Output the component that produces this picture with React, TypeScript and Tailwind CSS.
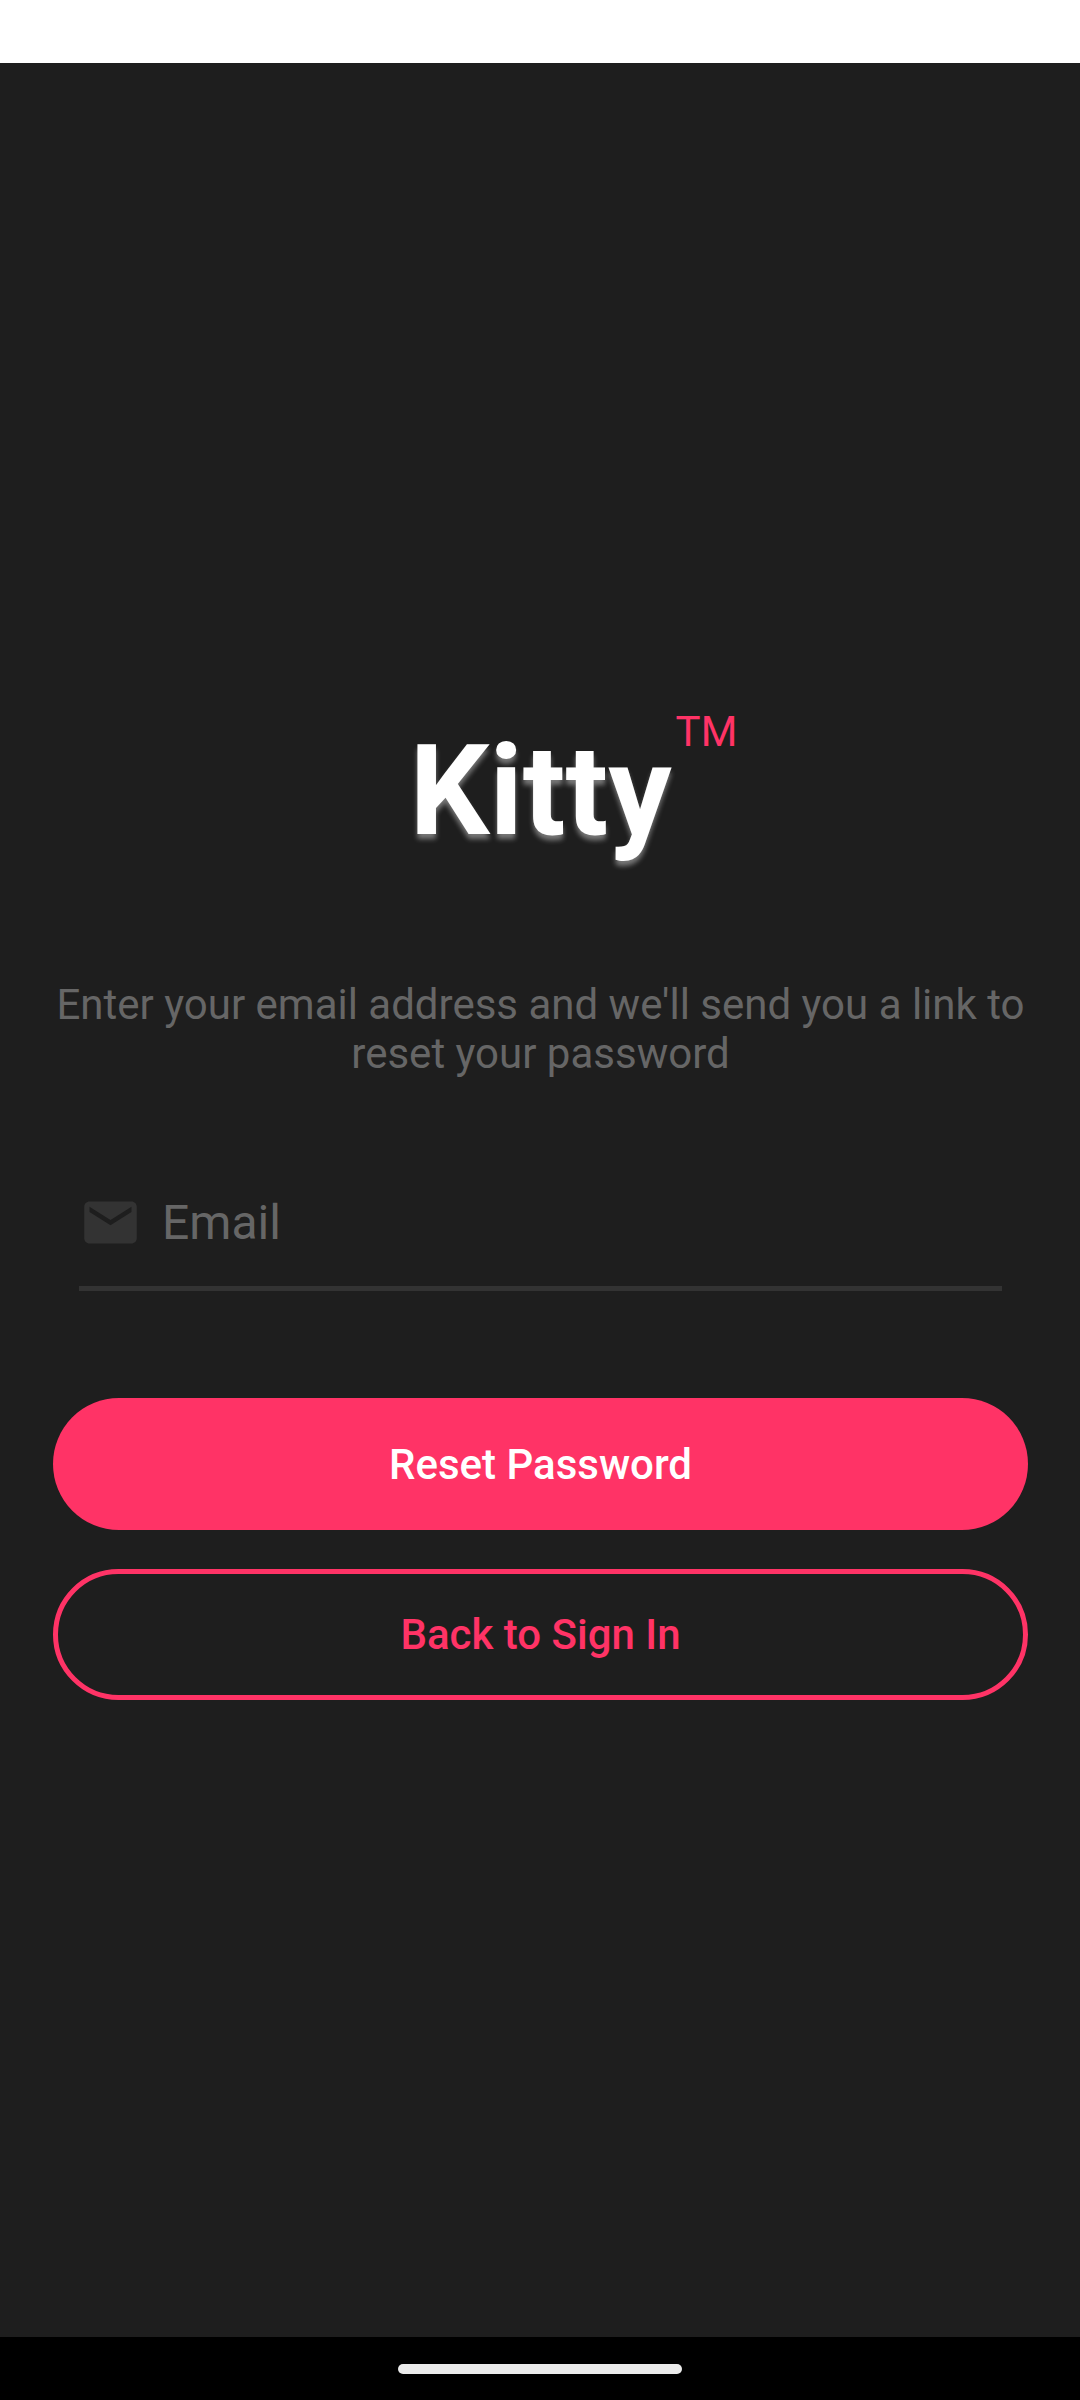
import React from "react";

export default function App() {
  return (
    <div className="flex min-h-screen flex-col bg-[#1e1e1e] font-['Roboto',sans-serif]">
      <div className="h-[63px] bg-white" />
      <main className="flex flex-1 flex-col items-stretch pt-[654px] pr-[52px] pl-[53px]">
        <h1 className="relative self-center text-[126px] leading-[148px] font-bold text-white [text-shadow:0px_5px_5px_rgba(255,255,255,0.4)]">
          Kitty
          <sup className="absolute top-[-10px] left-full ml-1 text-[42px] leading-[49px] font-normal text-[#ff3366] [text-shadow:none]">
            TM
          </sup>
        </h1>
        <p className="mt-[115px] text-center text-[42px] leading-[49px] text-[#666666]">
          Enter your email address and we'll send you a link to reset your password
        </p>
        <label className="mx-[26px] mt-[89px] flex h-[124px] items-center gap-5 border-b-[5px] border-[#333333] pb-2">
          <svg viewBox="0 0 24 24" className="size-[63px] fill-[#333333]" aria-hidden="true">
            <path d="M20 4H4c-1.1 0-2 .9-2 2v12c0 1.1.9 2 2 2h16c1.1 0 2-.9 2-2V6c0-1.1-.9-2-2-2zm0 4l-8 5-8-5V6l8 5 8-5v2z" />
          </svg>
          <input type="email" aria-label="Email" placeholder="Email" className="min-w-0 flex-1 bg-transparent text-[48px] text-white outline-none placeholder:text-[#666666]" />
        </label>
        <button className="mt-[107px] h-[132px] rounded-full bg-[#ff3366] text-[42px] font-medium text-white">Reset Password</button>
        <button className="mt-[39px] h-[131px] rounded-full border-[5px] border-[#ff3366] text-[42px] font-medium text-[#ff3366]">Back to Sign In</button>
      </main>
      <div className="flex h-[63px] items-center justify-center bg-black">
        <div className="h-[10px] w-[284px] rounded-full bg-[#ebebeb]" />
      </div>
    </div>
  );
}
